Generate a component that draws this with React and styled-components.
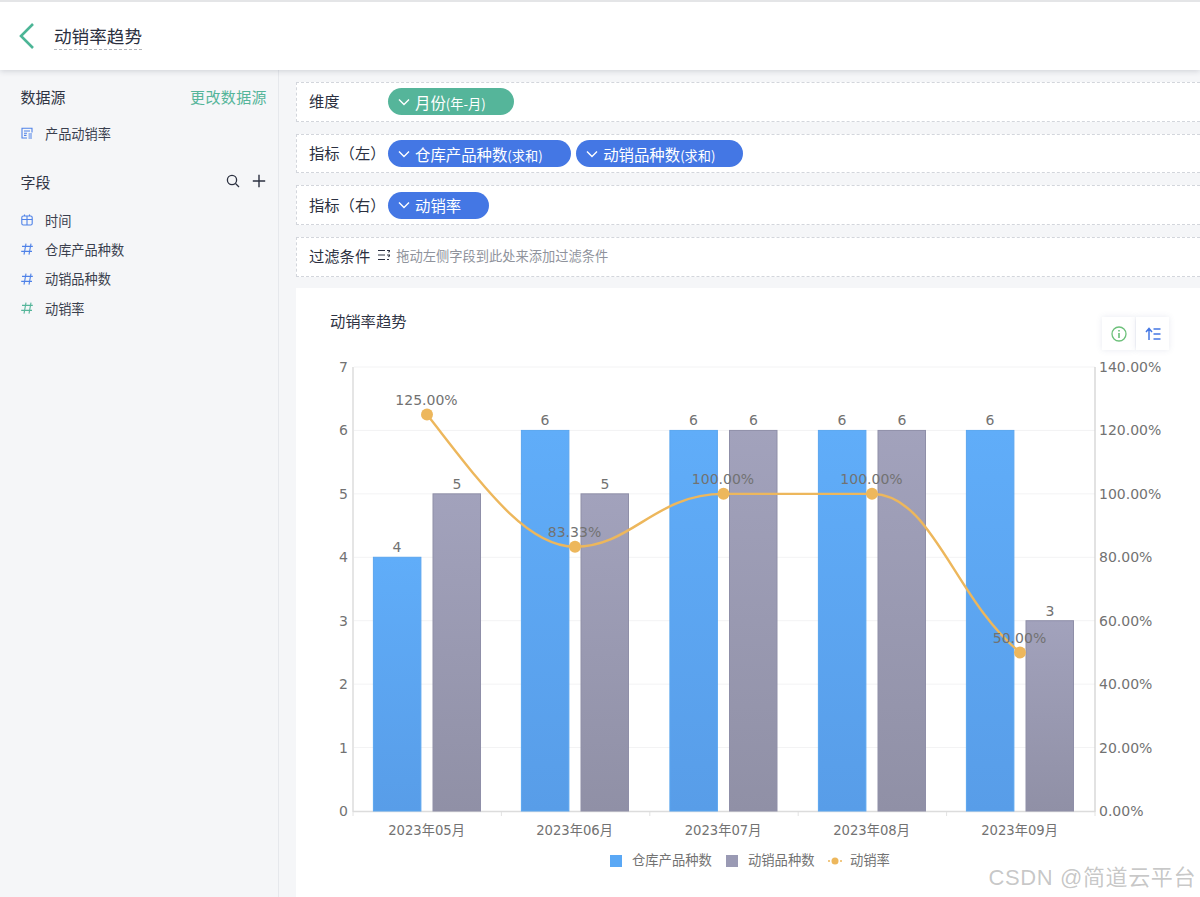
import React from "react";
import styled, { createGlobalStyle } from "styled-components";

const Global = createGlobalStyle`
  html, body { margin: 0; padding: 0; background: #f5f6f8; }
  * { box-sizing: border-box; }
  body { font-family: "Noto Sans CJK SC", "Noto Sans", sans-serif; color: #2b3040; }
`;
const Page = styled.div`
  width: 1200px; height: 897px; overflow: hidden; position: relative;
  display: flex; flex-direction: column; background: #f5f6f8;
`;
const Header = styled.header`
  height: 70px; flex: none; background: #fff; border-top: 2px solid #e4e5e7;
  box-shadow: 0 1px 6px rgba(30, 40, 60, .18); position: relative; z-index: 2;
  display: flex; align-items: center; padding-left: 18px; gap: 18px;
`;
const PageTitle = styled.h1`
  margin: 0; font-size: 17.6px; font-weight: 400; line-height: 26px; color: #2b3040;
  border-bottom: 1px dashed #b4b7bd; height: 27px; width: 88px; white-space: nowrap;
`;
const Body = styled.div`flex: 1; display: flex; min-height: 0;`;
const Sidebar = styled.aside`
  width: 279px; flex: none; border-right: 1px solid #e6e8ec; padding: 14px 11px 0 20.5px;
`;
const SideHead = styled.div`
  display: flex; justify-content: space-between; align-items: center; height: 24px;
  font-size: 15px; color: #2f3444;
`;
const ChangeLink = styled.span`color: #55b59a; letter-spacing: .4px;`;
const SourceRow = styled.div`
  display: flex; align-items: center; gap: 12.5px; height: 24px; margin-top: 13px;
  font-size: 13.2px; color: #3a3f4e;
`;
const FieldsHead = styled(SideHead)`margin-top: 24px; margin-bottom: 12.5px; padding-right: 1px;`;
const HeadTools = styled.div`display: flex; align-items: center; gap: 12px;`;
const FieldRow = styled.div`
  display: flex; align-items: center; gap: 12.5px; height: 29.3px; font-size: 13.2px; color: #3a3f4e;
`;
const Main = styled.main`flex: 1; min-width: 0; padding: 12px 0 0 17px; display: flex; flex-direction: column;`;
const DropRow = styled.div`
  height: 39.8px; margin-bottom: 11.9px; background: #fff; flex: none;
  border: 1px dashed #d3d6dc; border-right: none;
  display: flex; align-items: center; padding-left: 12px; font-size: 15.3px; color: #2b3040;
`;
const RowLabel = styled.span`width: 79px; flex: none; white-space: nowrap; margin-bottom: 3px;`;
const Chips = styled.div`display: flex; gap: 5.5px;`;
const Chip = styled.span`
  height: 27px; border-radius: 14px; color: #fff; display: inline-flex; align-items: center;
  padding: 0 28px 0 9px; gap: 4px; font-size: 15.4px; white-space: nowrap;
  background: ${p => (p.$green ? "#55b59a" : "#4477e4")};
`;
const ChipSub = styled.span`font-size: 13.2px;`;
const FilterLabel = styled.span`white-space: nowrap; margin: 0 7.5px 3px 0;`;
const Placeholder = styled.span`font-size: 13.25px; color: #8f939c; margin: 0 0 3px 6.5px; white-space: nowrap;`;
const FilterIcon = styled.svg`margin-bottom: 3px;`;
const Card = styled.section`flex: 1; background: #fff; position: relative; margin-top: -.6px;`;
const CardTitle = styled.h2`
  margin: 0; padding: 20px 0 0 34px; height: 52px; font-size: 15.3px; font-weight: 400; line-height: 24px; color: #2f3444;
`;
const CardTools = styled.div`position: absolute; right: 31px; top: 29px; display: flex; gap: 1px;`;
const CardTool = styled.div`
  width: 33px; height: 33px; display: flex; align-items: center; justify-content: center;
  background: #fff; box-shadow: 0 0 6px rgba(80, 90, 150, .13);
`;
const ChartSvg = styled.svg`display: block;`;
const AxisText = styled.text`
  font-family: "DejaVu Sans", "Noto Sans CJK SC", sans-serif; font-size: 14px; fill: #727272;
`;
const LegendText = styled.text`
  font-family: "Noto Sans CJK SC", sans-serif; font-size: 13.3px; fill: #727272;
`;
const Watermark = styled.div`
  position: absolute; right: 4px; bottom: 4px; font-size: 22px; line-height: 30px; color: rgba(120,120,120,.42);
  font-family: "Liberation Sans", "Noto Sans CJK SC", sans-serif; letter-spacing: .6px; z-index: 3;
`;

const Chevron = () => (
  <svg width="14" height="14" viewBox="0 0 14 14" fill="none" stroke="#fff" strokeWidth="1.4">
    <path d="M2 4.5 7 9.5 12 4.5" />
  </svg>
);
const Hash = ({ c }) => (
  <svg width="12" height="12" viewBox="0 0 12 12" fill="none" stroke={c} strokeWidth="1.1">
    <path d="M1 3.4H11.8M.2 8.4H11M5 .6 3 11.6M10 .6 8 11.6" />
  </svg>
);
const Cal = () => (
  <svg width="12" height="12" viewBox="0 0 12 12" fill="none" stroke="#4f82e8" strokeWidth="1.1">
    <rect x=".8" y="2" width="10.4" height="9" rx="1.5" />
    <path d="M.8 5.5H11.2M6 2V11M3.5 .5V2M8.5 .5V2" />
  </svg>
);
const Sheet = () => (
  <svg width="12" height="12" viewBox="0 0 12 12" fill="none" stroke="#4f82e8" strokeWidth="1.1">
    <path d="M11 5.5V1.2H1V11H6" />
    <path d="M3 4H9M3 6.2H6M3 8.4H5.5M7.5 7H11M7.5 9H11M7.5 11H11" />
  </svg>
);

const Y0 = 811;
const yL = v => Y0 - (v * 444) / 7;
const yR = v => Y0 - (v * 444) / 140;
const data = [
  { m: "2023年05月", c: 427, a: 4, b: 5 },
  { m: "2023年06月", c: 575, a: 6, b: 5 },
  { m: "2023年07月", c: 723.5, a: 6, b: 6 },
  { m: "2023年08月", c: 872, a: 6, b: 6 },
  { m: "2023年09月", c: 1020, a: 6, b: 3 },
];
const points = [
  { x: 427, v: 125, t: "125.00%" },
  { x: 575, v: 83.33, t: "83.33%" },
  { x: 723.5, v: 100, t: "100.00%" },
  { x: 872, v: 100, t: "100.00%" },
  { x: 1020, v: 50, t: "50.00%" },
];
const axisX = [353, 501.4, 649.8, 798.2, 946.6, 1095];

const Chart = () => (
  <ChartSvg width="904" height="557" viewBox="296 340 904 557">
    <defs>
      <linearGradient id="ga" x1="0" y1="0" x2="0" y2="1">
        <stop offset="0" stopColor="#60adf9" />
        <stop offset="1" stopColor="#589de8" />
      </linearGradient>
      <linearGradient id="gb" x1="0" y1="0" x2="0" y2="1">
        <stop offset="0" stopColor="#a2a2bc" />
        <stop offset="1" stopColor="#9090a6" />
      </linearGradient>
    </defs>
    {[1, 2, 3, 4, 5, 6, 7].map(v => (
      <line key={v} x1="354" x2="1095" y1={yL(v)} y2={yL(v)} stroke="#f3f3f4" strokeWidth="1" />
    ))}
    <line x1="353" x2="353" y1="367" y2="812" stroke="#dcdcdc" strokeWidth="1.5" />
    <line x1="1095" x2="1095" y1="367" y2="812" stroke="#cfcfcf" strokeWidth="1.2" />
    <line x1="353" x2="1095" y1="811.5" y2="811.5" stroke="#dcdcdc" strokeWidth="1.5" />
    {axisX.map(x => (
      <line key={x} x1={x} x2={x} y1="812" y2="816" stroke="#e2e2e2" strokeWidth="1" />
    ))}
    {[0, 1, 2, 3, 4, 5, 6, 7].map(v => (
      <AxisText key={v} x="348" y={yL(v) + 5} textAnchor="end">{v}</AxisText>
    ))}
    {[0, 20, 40, 60, 80, 100, 120, 140].map(v => (
      <AxisText key={v} x="1099" y={yR(v) + 5}>{v}.00%</AxisText>
    ))}
    {data.map(d => (
      <g key={d.m}>
        <rect x={d.c - 53.6} y={yL(d.a)} width="47.5" height={Y0 - yL(d.a)} fill="url(#ga)" stroke="#5aa6ef" strokeWidth="1" />
        <rect x={d.c + 6} y={yL(d.b)} width="47.5" height={Y0 - yL(d.b)} fill="url(#gb)" stroke="#8f8fa8" strokeWidth="1" />
        <AxisText x={d.c - 30} y={yL(d.a) - 5} textAnchor="middle">{d.a}</AxisText>
        <AxisText x={d.c + 30} y={yL(d.b) - 5} textAnchor="middle">{d.b}</AxisText>
        <AxisText x={d.c - 0.5} y="835" textAnchor="middle" style={{ fontSize: 13.2 }}>{d.m}</AxisText>
      </g>
    ))}
    <path
      d="M427 414.6C480 482 525 546.7 575 546.7C632 546.7 655 493.9 723.5 493.9L872 493.9C932 493.9 955 600 1020 652.4"
      fill="none" stroke="#edb75c" strokeWidth="2.4"
    />
    {points.map(p => (
      <g key={p.x}>
        <circle cx={p.x} cy={yR(p.v)} r="6" fill="#edb75c" />
        <AxisText x={p.x - 0.5} y={yR(p.v) - 9.5} textAnchor="middle">{p.t}</AxisText>
      </g>
    ))}
    <rect x="610" y="855" width="12" height="12" fill="#5aa8f5" />
    <LegendText x="632" y="865">仓库产品种数</LegendText>
    <rect x="726" y="855" width="12" height="12" fill="#9a9ab4" />
    <LegendText x="748" y="865">动销品种数</LegendText>
    <line x1="828" x2="842" y1="861" y2="861" stroke="#edb75c" strokeWidth="1.4" strokeDasharray="2 2" />
    <circle cx="835" cy="861" r="3.5" fill="#edb75c" />
    <LegendText x="850" y="865">动销率</LegendText>
  </ChartSvg>
);

export default function App() {
  return (
    <Page>
      <Global />
      <Header>
        <svg width="18" height="28" viewBox="0 0 18 28" fill="none" stroke="#4cb596" strokeWidth="2.6">
          <path d="M15 2 3 14 15 26" />
        </svg>
        <PageTitle>动销率趋势</PageTitle>
      </Header>
      <Body>
        <Sidebar>
          <SideHead>
            <span>数据源</span>
            <ChangeLink>更改数据源</ChangeLink>
          </SideHead>
          <SourceRow><Sheet />产品动销率</SourceRow>
          <FieldsHead>
            <span>字段</span>
            <HeadTools>
              <svg width="14" height="14" viewBox="0 0 14 14" fill="none" stroke="#2b3040" strokeWidth="1.3">
                <circle cx="6" cy="6" r="4.6" />
                <path d="M9.5 9.5 13 13" />
              </svg>
              <svg width="14" height="14" viewBox="0 0 14 14" fill="none" stroke="#2b3040" strokeWidth="1.4">
                <path d="M7 .8V13.2M.8 7H13.2" />
              </svg>
            </HeadTools>
          </FieldsHead>
          <FieldRow><Cal />时间</FieldRow>
          <FieldRow><Hash c="#4f82e8" />仓库产品种数</FieldRow>
          <FieldRow><Hash c="#4f82e8" />动销品种数</FieldRow>
          <FieldRow><Hash c="#55b59a" />动销率</FieldRow>
        </Sidebar>
        <Main>
          <DropRow>
            <RowLabel>维度</RowLabel>
            <Chips><Chip $green><Chevron /><span>月份<ChipSub>(年-月)</ChipSub></span></Chip></Chips>
          </DropRow>
          <DropRow>
            <RowLabel>指标（左）</RowLabel>
            <Chips>
              <Chip><Chevron /><span>仓库产品种数<ChipSub>(求和)</ChipSub></span></Chip>
              <Chip><Chevron /><span>动销品种数<ChipSub>(求和)</ChipSub></span></Chip>
            </Chips>
          </DropRow>
          <DropRow>
            <RowLabel>指标（右）</RowLabel>
            <Chips><Chip><Chevron />动销率</Chip></Chips>
          </DropRow>
          <DropRow>
            <FilterLabel>过滤条件</FilterLabel>
            <FilterIcon width="12" height="12" viewBox="0 0 12 12" fill="none" stroke="#2b3040" strokeWidth="1.2">
              <path d="M0 1.5H7M0 6H7M0 10.5H7M9 1.5H12L10.5 3.5M9 6H12L10.5 8M9 10.5H11" />
            </FilterIcon>
            <Placeholder>拖动左侧字段到此处来添加过滤条件</Placeholder>
          </DropRow>
          <Card>
            <CardTitle>动销率趋势</CardTitle>
            <CardTools>
              <CardTool>
                <svg width="16" height="16" viewBox="0 0 16 16" fill="none" stroke="#6cc07a" strokeWidth="1.3">
                  <circle cx="8" cy="8" r="7" />
                  <path d="M8 7V12M8 4V5.4" strokeWidth="1.6" />
                </svg>
              </CardTool>
              <CardTool>
                <svg width="16" height="14" viewBox="0 0 16 14" fill="none" stroke="#4477e4" strokeWidth="1.5">
                  <path d="M4 13V2M1 5 4 1.5 7 5M8.5 2H15.5M8.5 7H15.5M8.5 12H15.5" />
                </svg>
              </CardTool>
            </CardTools>
            <Chart />
          </Card>
        </Main>
      </Body>
      <Watermark>CSDN @简道云平台</Watermark>
    </Page>
  );
}
